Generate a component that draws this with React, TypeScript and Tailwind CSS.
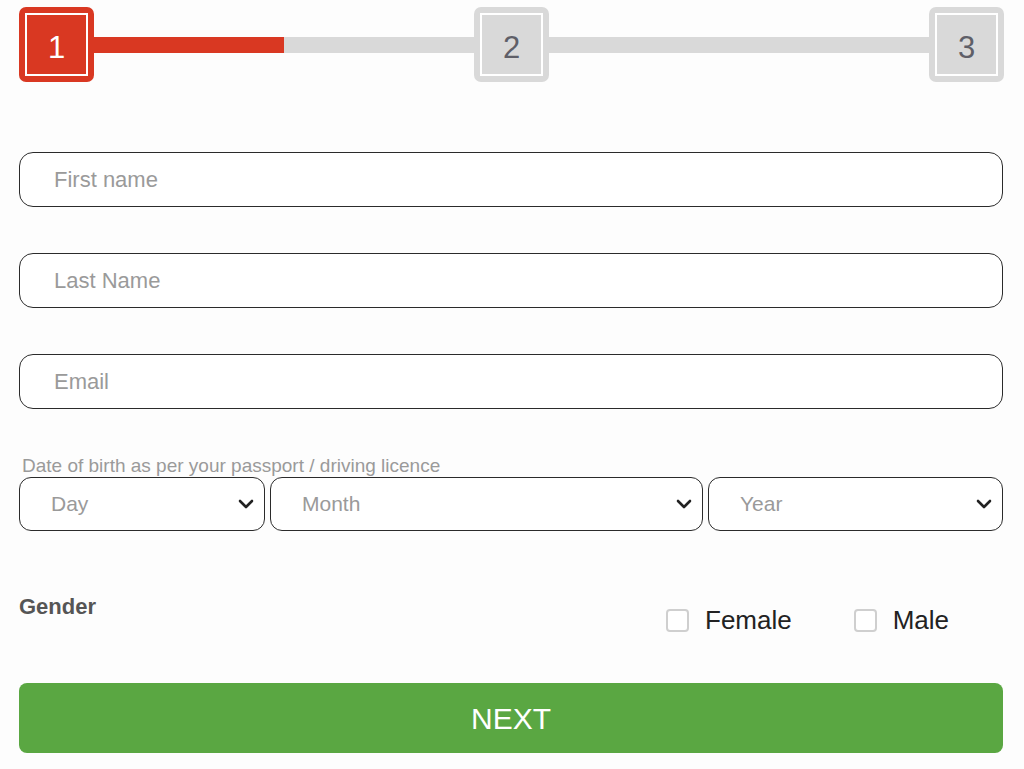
import React from "react";

const font = { fontFamily: '"Liberation Sans", Arial, sans-serif' };

function StepBox({ n, active }: { n: number; active?: boolean }) {
  return (
    <div
      className={
        "flex h-[75px] w-[75px] shrink-0 items-center justify-center rounded-[7px] p-[6px] " +
        (active ? "bg-[#d93822]" : "bg-[#d9d9d9]")
      }
    >
      <div
        className={
          "flex h-full w-full items-center justify-center border-[2.5px] border-white pt-[8px] text-[31px] " +
          (active ? "text-white" : "text-[#5f5f68]")
        }
      >
        {n}
      </div>
    </div>
  );
}

function Chevron() {
  return (
    <svg width="16" height="10" viewBox="0 0 16 10" className="shrink-0">
      <path d="M2 2 L8 8 L14 2" fill="none" stroke="#222" strokeWidth="2.6" strokeLinecap="round" strokeLinejoin="round" />
    </svg>
  );
}

function TextField({ placeholder }: { placeholder: string }) {
  return (
    <input
      placeholder={placeholder}
      className="h-[55px] w-full rounded-[14px] border-[1.5px] border-[#2b2b2b] bg-white pl-[34px] text-[22px] text-[#333] outline-none placeholder:text-[#9a9a9a]"
      style={font}
    />
  );
}

function SelectBox({ label, className }: { label: string; className: string }) {
  return (
    <div
      className={
        "flex h-[54px] items-center justify-between rounded-[12px] border-[1.5px] border-[#2b2b2b] bg-white pl-[31px] pr-[10px] " +
        className
      }
    >
      <span className="text-[21px] text-[#9a9a9a]">{label}</span>
      <Chevron />
    </div>
  );
}

function Check({ label }: { label: string }) {
  return (
    <label className="flex items-center gap-[16px]">
      <span className="h-[23px] w-[23px] rounded-[4px] border-2 border-[#cfcfcf] bg-white" />
      <span className="text-[26px] text-[#222]">{label}</span>
    </label>
  );
}

export default function App() {
  return (
    <div className="min-h-[769px] w-[1024px] bg-[#fdfdfd] px-[19px] pt-[7px]" style={font}>
      {/* Stepper */}
      <div className="flex w-[985px] items-center">
        <StepBox n={1} active />
        <div className="flex h-[16px] flex-1 bg-[#d9d9d9]">
          <div className="h-full w-1/2 bg-[#d93822]" />
        </div>
        <StepBox n={2} />
        <div className="h-[16px] flex-1 bg-[#d9d9d9]" />
        <StepBox n={3} />
      </div>

      {/* Fields */}
      <div className="mt-[70px] flex w-[984px] flex-col gap-[46px]">
        <TextField placeholder="First name" />
        <TextField placeholder="Last Name" />
        <TextField placeholder="Email" />
      </div>

      <div className="mt-[47px] w-[984px]">
        <div className="pl-[3px] text-[19px] leading-[20px] text-[#9a9a9a]">
          Date of birth as per your passport / driving licence
        </div>
        <div className="mt-[1px] flex gap-[5px]">
          <SelectBox label="Day" className="w-[246px]" />
          <SelectBox label="Month" className="w-[433px]" />
          <SelectBox label="Year" className="flex-1" />
        </div>
      </div>

      {/* Gender */}
      <div className="mt-[63px] flex h-[56px] w-[984px] items-start">
        <div className="w-[647px] text-[22px] font-bold leading-[26px] text-[#555]">Gender</div>
        <div className="mt-[7px] flex items-center gap-[62px]">
          <Check label="Female" />
          <Check label="Male" />
        </div>
      </div>

      <button className="mt-[33px] flex h-[70px] w-[984px] items-center justify-center rounded-[8px] bg-[#5aa742] text-[30px] text-white">
        NEXT
      </button>
    </div>
  );
}
